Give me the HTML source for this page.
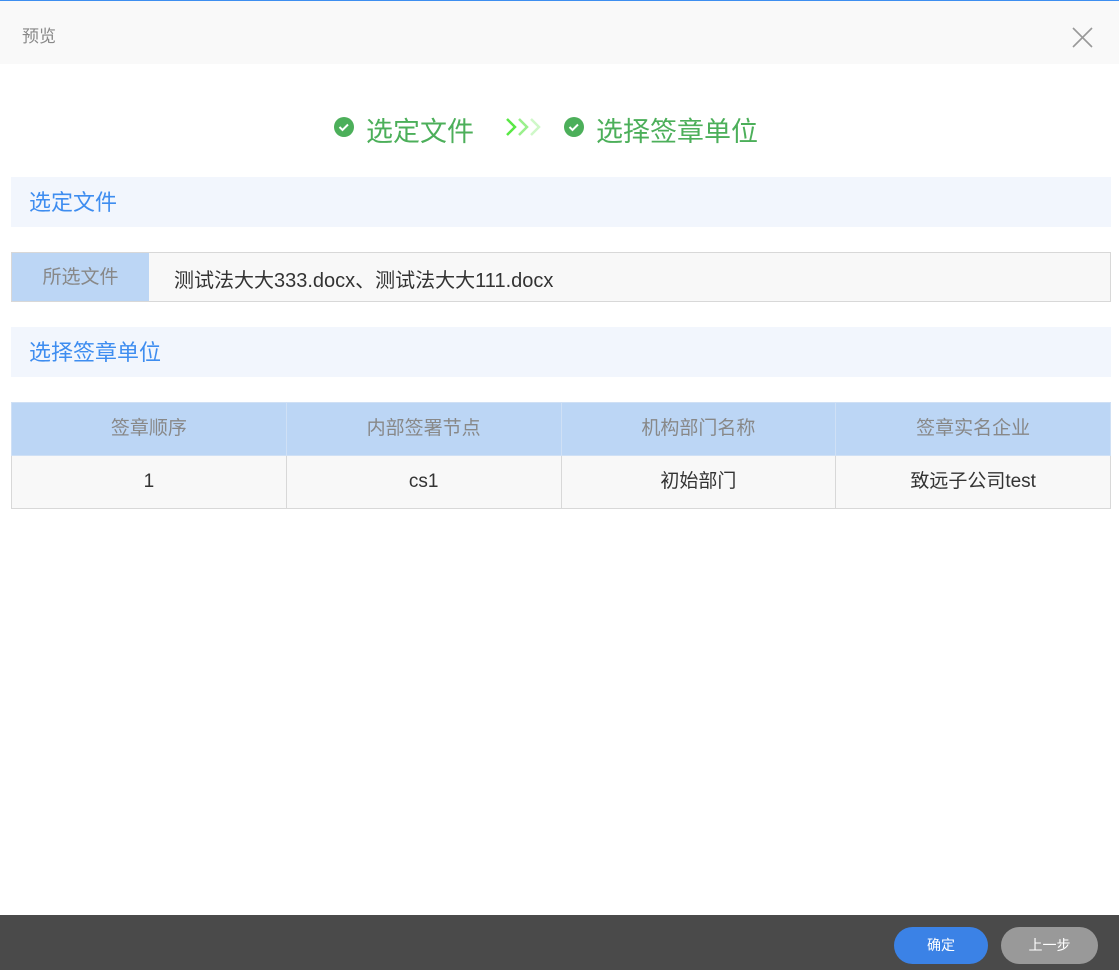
<!DOCTYPE html><html><head><meta charset="utf-8"><style>
body{margin:0;width:1119px;height:970px;position:relative;background:#fff;font-family:"Liberation Sans","Noto Sans CJK SC",sans-serif;overflow:hidden}
.a{position:absolute}
.top{left:0;top:0;width:1119px;height:64px;background:#f9f9f9;border-top:1px solid #3d8ef0;box-sizing:border-box}
.sec{left:11px;width:1100px;height:50px;background:#f2f6fd;color:#3e8df0;font-size:22px;line-height:52px;padding-left:18px;box-sizing:border-box}
table{border-collapse:collapse;position:absolute;left:11px;top:402px;width:1100px;table-layout:fixed}
td{border:1px solid #d8d8d8;height:52px;padding:0;line-height:52px;vertical-align:middle;text-align:center;font-size:19px;color:#333;background:#f8f8f8}
tr:first-child td{background:#bcd6f5;color:#888;border-color:#cfe0f5}
.btn{top:927px;height:37px;width:94px;border-radius:19px;color:#fff;font-size:14px;text-align:center;line-height:37px}
</style></head><body>
<div class="a top"><span class="a" style="left:22px;top:21px;font-size:17px;color:#888">预览</span>
<svg class="a" style="left:1072px;top:26px" width="21" height="21"><path d="M1 1L20 20M20 1L1 20" stroke="#999" stroke-width="1.6"/></svg></div>
<svg class="a" style="left:334px;top:117px" width="20" height="20"><circle cx="10" cy="10" r="10" fill="#4caf5a"/><path d="M5.5 10l3 3 5.5-5.5" stroke="#fff" stroke-width="2" fill="none"/></svg>
<span class="a" style="left:366px;top:110px;font-size:27px;color:#4caf5a">选定文件</span>
<svg class="a" style="left:505px;top:117px" width="40" height="20"><path d="M2 2l8 8-8 8" stroke="#59e845" stroke-width="2.5" fill="none"/><path d="M14 2l8 8-8 8" stroke="#9af08c" stroke-width="2.5" fill="none"/><path d="M26 2l8 8-8 8" stroke="#cff8c8" stroke-width="2.5" fill="none"/></svg>
<svg class="a" style="left:564px;top:117px" width="20" height="20"><circle cx="10" cy="10" r="10" fill="#4caf5a"/><path d="M5.5 10l3 3 5.5-5.5" stroke="#fff" stroke-width="2" fill="none"/></svg>
<span class="a" style="left:596px;top:110px;font-size:27px;color:#4caf5a">选择签章单位</span>
<div class="a sec" style="top:177px">选定文件</div>
<div class="a" style="left:11px;top:252px;width:1100px;height:50px;border:1px solid #d8d8d8;box-sizing:border-box;background:#f8f8f8">
<div class="a" style="left:0;top:0;width:137px;height:48px;background:#bcd6f5;color:#888;font-size:19px;line-height:50px;text-align:center">所选文件</div>
<span class="a" style="left:162px;top:11px;font-size:20px;color:#333">测试法大大333.docx、测试法大大111.docx</span></div>
<div class="a sec" style="top:327px">选择签章单位</div>
<table><tr><td>签章顺序</td><td>内部签署节点</td><td>机构部门名称</td><td>签章实名企业</td></tr>
<tr><td>1</td><td>cs1</td><td>初始部门</td><td>致远子公司test</td></tr></table>
<div class="a" style="left:0;top:915px;width:1119px;height:55px;background:#4a4a4a"></div>
<div class="a btn" style="left:894px;background:#3b82e6">确定</div>
<div class="a btn" style="left:1001px;width:97px;background:#999">上一步</div>
</body></html>
